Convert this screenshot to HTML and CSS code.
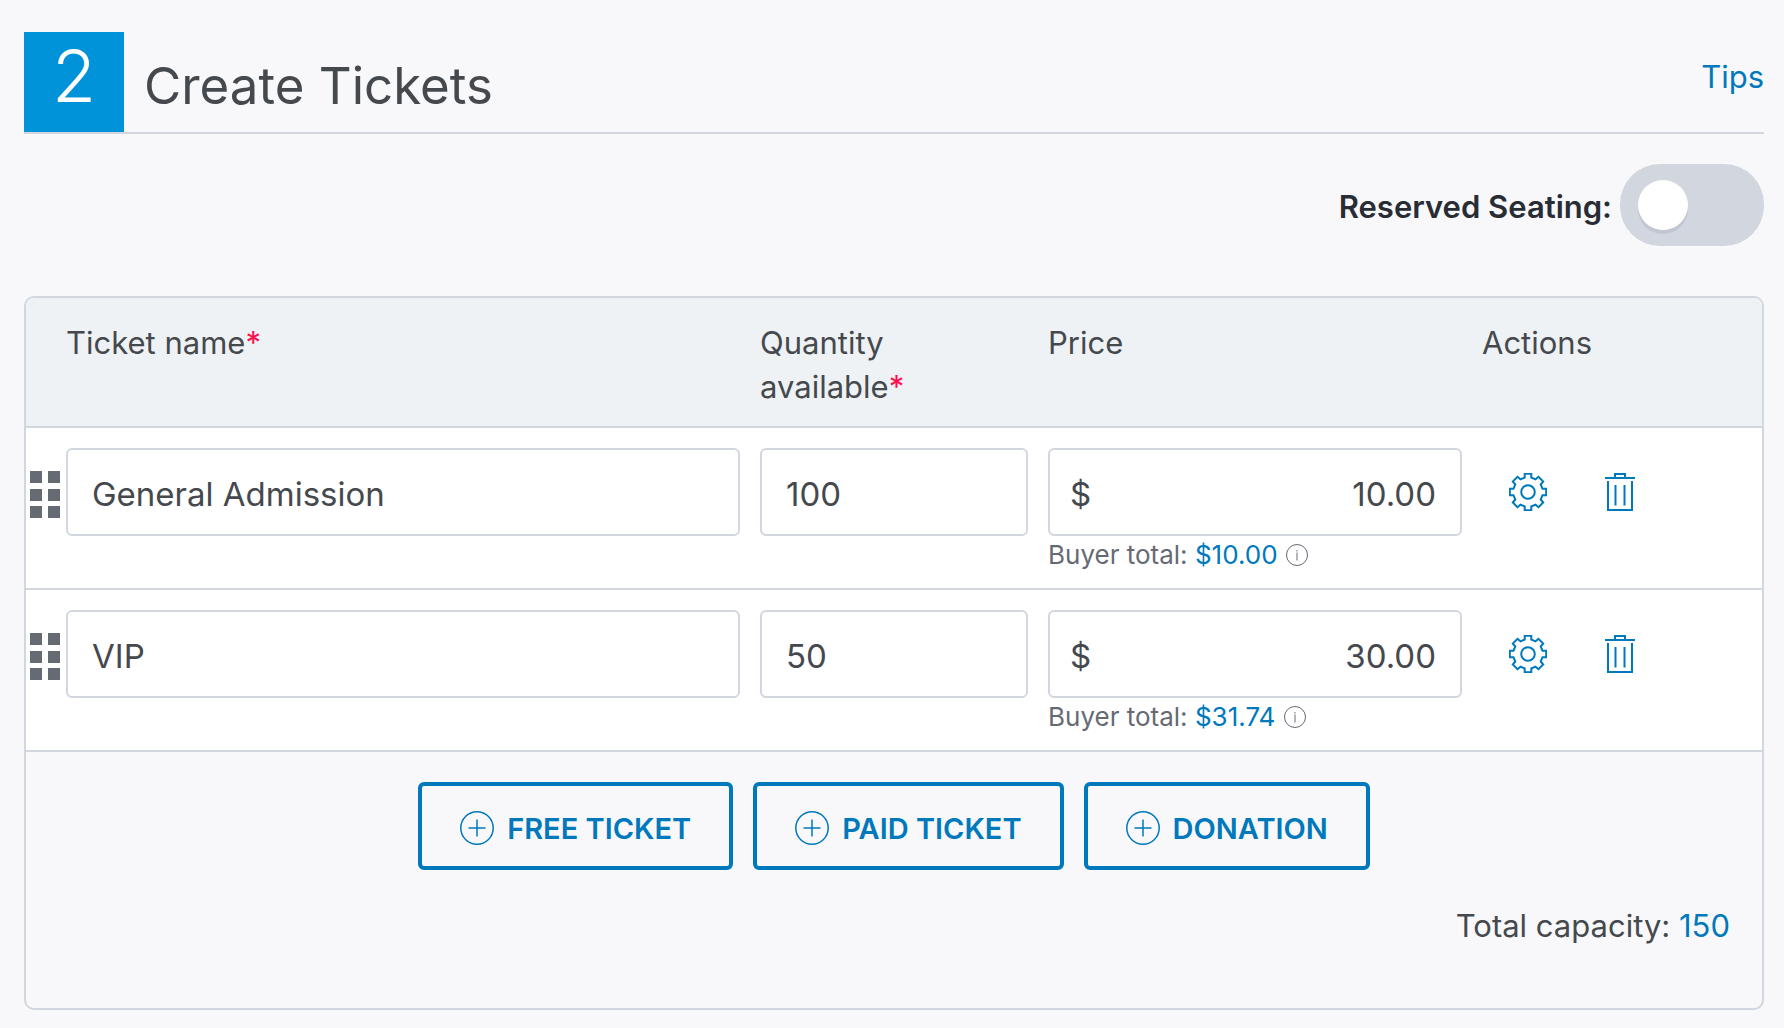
FILE: index.html
```html
<!DOCTYPE html>
<html lang="en">
<head>
  <meta charset="UTF-8" />
  <title>Create Tickets</title>
  <link rel="stylesheet" href="styles.css">
</head>
<body>
  <!-- Shared icons -->
  <svg class="icon-defs" width="0" height="0" aria-hidden="true">
    <symbol id="icon-gear" viewBox="-19 -19 38 38">
      <path d="M-3.3-14.5V-18.2H3.3V-14.5L7.5-12.7L10.5-15.2L15.2-10.5L12.7-7.5L14.5-3.3H18.2V3.3H14.5L12.7 7.5L15.2 10.5L10.5 15.2L7.5 12.7L3.3 14.5V18.2H-3.3V14.5L-7.5 12.7L-10.5 15.2L-15.2 10.5L-12.7 7.5L-14.5 3.3H-18.2V-3.3H-14.5L-12.7-7.5L-15.2-10.5L-10.5-15.2L-7.5-12.7Z" />
      <circle r="6.8" />
    </symbol>
    <symbol id="icon-trash" viewBox="0 0 30 38">
      <path d="M0 5H30M10 5V1H20V5M3 8V37H27V8M10.5 12V32.500M19.500 12V32.500" />
    </symbol>
    <symbol id="icon-info" viewBox="0 0 24 24">
      <circle cx="12" cy="12" r="10.5" />
      <path d="M12 9.500V17.500M12 7V8.500" />
    </symbol>
    <symbol id="icon-plus" viewBox="0 0 34 34">
      <circle cx="17" cy="17" r="16.200" />
      <path d="M17 8.500V25.500M8.500 17H25.500" />
    </symbol>
    <symbol id="icon-grip" viewBox="0 0 30 48">
      <path d="M0 0H12V12H0ZM18 0H30V12H18ZM0 18H12V30H0ZM18 18H30V30H18ZM0 35H12V47H0ZM18 35H30V47H18Z" />
    </symbol>
  </svg>

  <section class="tickets">
    <header class="section-head">
      <span class="step">2</span>
      <h1>Create Tickets</h1>
      <a class="tips" href="#tips">Tips</a>
    </header>

    <div class="seating">
      <label for="reserved">Reserved Seating:</label>
      <input class="toggle" id="reserved" type="checkbox" role="switch" />
    </div>

    <div class="panel">
      <table class="ticket-table">
        <colgroup>
          <col class="col-grip" />
          <col />
          <col class="col-qty" />
          <col class="col-price" />
          <col class="col-actions" />
        </colgroup>
        <thead>
          <tr>
            <th></th>
            <th id="th-name">Ticket name<span class="required">*</span></th>
            <th id="th-qty">Quantity<br />available<span class="required">*</span></th>
            <th id="th-price">Price</th>
            <th>Actions</th>
          </tr>
        </thead>
        <tbody>
          <tr>
            <td class="grip"><svg><use href="#icon-grip" /></svg></td>
            <td><input class="field" type="text" value="General Admission" aria-labelledby="th-name" /></td>
            <td><input class="field" type="text" value="100" aria-labelledby="th-qty" /></td>
            <td>
              <div class="field price">
                <span>$</span>
                <input type="text" value="10.00" aria-labelledby="th-price" />
              </div>
              <p class="buyer-total">Buyer total: <a href="#fees">$10.00</a> <svg><use href="#icon-info" /></svg></p>
            </td>
            <td>
              <div class="actions">
                <button type="button" aria-label="Settings"><svg class="gear"><use href="#icon-gear" /></svg></button>
                <button type="button" aria-label="Delete"><svg class="trash"><use href="#icon-trash" /></svg></button>
              </div>
            </td>
          </tr>
          <tr>
            <td class="grip"><svg><use href="#icon-grip" /></svg></td>
            <td><input class="field" type="text" value="VIP" aria-labelledby="th-name" /></td>
            <td><input class="field" type="text" value="50" aria-labelledby="th-qty" /></td>
            <td>
              <div class="field price">
                <span>$</span>
                <input type="text" value="30.00" aria-labelledby="th-price" />
              </div>
              <p class="buyer-total">Buyer total: <a href="#fees">$31.74</a> <svg><use href="#icon-info" /></svg></p>
            </td>
            <td>
              <div class="actions">
                <button type="button" aria-label="Settings"><svg class="gear"><use href="#icon-gear" /></svg></button>
                <button type="button" aria-label="Delete"><svg class="trash"><use href="#icon-trash" /></svg></button>
              </div>
            </td>
          </tr>
        </tbody>
      </table>

      <div class="add-buttons">
        <button class="add" type="button"><svg><use href="#icon-plus" /></svg>FREE TICKET</button>
        <button class="add" type="button"><svg><use href="#icon-plus" /></svg>PAID TICKET</button>
        <button class="add" type="button"><svg><use href="#icon-plus" /></svg>DONATION</button>
      </div>
      <p class="capacity">Total capacity: <a href="#capacity">150</a></p>
    </div>
  </section>
</body>
</html>
```

FILE: styles.css
```css
* {
  box-sizing: border-box;
}

body {
  background: #f8f8fa;
  color: #45494e;
  font-family: Inter, "Liberation Sans", sans-serif;
  font-size: 31px;
  line-height: 44px;
  margin: 0;
  padding: 32px 20px 18px 24px;
}

h1, p {
  margin: 0;
  font-weight: 400;
}

a {
  color: #0079bc;
  text-decoration: none;
}

svg {
  fill: none;
  stroke: currentColor;
}

.icon-defs {
  position: absolute;
}

/* Heading */
.section-head {
  display: flex;
  border-bottom: 2px solid #d2d6df;
}

.step {
  width: 100px;
  height: 100px;
  background: #0093d9;
  color: #fff;
  font-size: 72px;
  font-weight: 300;
  line-height: 88px;
  text-align: center;
}

h1 {
  flex: 1;
  margin-left: 20px;
  padding-top: 8px;
  font-size: 51px;
  line-height: 92px;
}

.tips {
  padding-top: 23px;
}

/* Reserved seating switch */
.seating {
  display: flex;
  justify-content: flex-end;
  align-items: center;
  gap: 8px;
  margin: 30px 0 50px;
  color: #282c35;
  font-weight: 600;
}

.seating label {
  padding-top: 4px;
}

.toggle {
  appearance: none;
  width: 144px;
  height: 82px;
  margin: 0;
  padding: 16px 18px;
  border-radius: 40px;
  background: #d2d6df;
}

.toggle::before {
  content: "";
  display: block;
  width: 50px;
  height: 50px;
  border-radius: 50%;
  background: #fff;
  box-shadow: 0 4px 0 #c3c6d0;
}

.toggle:checked {
  background: #0093d9;
}

.toggle:checked::before {
  margin-left: auto;
}

/* Ticket table */
.panel {
  border: 2px solid #d2d6df;
  border-radius: 10px;
  overflow: hidden;
}

.ticket-table {
  width: 100%;
  table-layout: fixed;
  border-spacing: 0;
}

.col-grip {
  width: 40px;
}

.col-qty {
  width: 288px;
}

.col-price {
  width: 434px;
}

.col-actions {
  width: 280px;
}

th {
  height: 130px;
  padding: 23px 0 16px;
  background: #eef2f5;
  border-bottom: 2px solid #d2d6df;
  font-weight: 400;
  text-align: left;
  vertical-align: top;
}

.required {
  color: #ff0f50;
}

td {
  height: 162px;
  padding: 20px 20px 0 0;
  background: #fff;
  border-bottom: 2px solid #d2d6df;
  vertical-align: top;
}

.grip {
  padding: 43px 0 0 4px;
  color: #666a73;
}

.grip svg {
  display: block;
  width: 30px;
  height: 48px;
  fill: currentColor;
  stroke: none;
}

.field {
  display: block;
  width: 100%;
  height: 88px;
  padding: 4px 24px 0;
  background: #fff;
  border: 2px solid #d2d6df;
  border-radius: 6px;
  color: inherit;
  font-family: inherit;
  font-size: 33px;
}

.price {
  display: flex;
  align-items: center;
  padding-left: 20px;
}

.price input {
  flex: 1;
  min-width: 0;
  padding: 0;
  border: 0;
  color: inherit;
  font: inherit;
  text-align: right;
}

.buyer-total {
  color: #666a73;
  font-size: 26px;
  line-height: 38px;
}

.buyer-total svg {
  width: 24px;
  height: 24px;
  vertical-align: -3px;
}

.actions {
  display: flex;
  align-items: center;
  gap: 58px;
  height: 88px;
  padding-left: 27px;
}

.actions button {
  padding: 0;
  border: 0;
  background: none;
  color: #0079bc;
}

.actions svg {
  display: block;
  height: 38px;
  stroke-width: 2;
}

.gear {
  width: 38px;
}

.trash {
  width: 30px;
}

/* Footer */
.add-buttons {
  display: flex;
  justify-content: center;
  gap: 20px;
  padding-top: 30px;
}

.add {
  display: flex;
  align-items: center;
  gap: 13px;
  height: 88px;
  padding: 4px 38px 0;
  background: none;
  border: 4px solid #0079bc;
  border-radius: 6px;
  color: #0079bc;
  font-family: inherit;
  font-size: 29px;
  font-weight: 600;
}

.add svg {
  width: 34px;
  height: 34px;
  stroke-width: 1.5;
}

.capacity {
  padding: 34px 32px 60px;
  text-align: right;
}
```
